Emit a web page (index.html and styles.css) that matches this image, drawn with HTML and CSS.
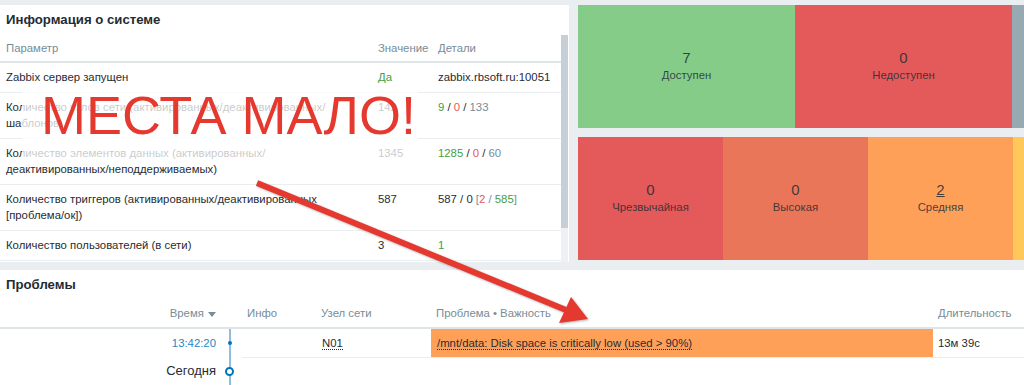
FILE: index.html
```html
<!DOCTYPE html>
<html lang="ru">

<head>
    <meta charset="UTF-8">
    <meta name="viewport" content="width=device-width, initial-scale=1.0">
    <title>Панель</title>
    <link rel="stylesheet" href="styles.css">
</head>

<body>
    <div class="dashboard">
        <div class="top-row">
            <section class="widget sysinfo">
                <h2 class="widget-title">Информация о системе</h2>
                <div class="scroll-area">
                    <table class="list">
                        <colgroup>
                            <col class="w-param">
                            <col class="w-val">
                            <col>
                        </colgroup>
                        <thead>
                            <tr>
                                <th>Параметр</th>
                                <th>Значение</th>
                                <th>Детали</th>
                            </tr>
                        </thead>
                        <tbody>
                            <tr>
                                <td>Zabbix сервер запущен</td>
                                <td class="green">Да</td>
                                <td>zabbix.rbsoft.ru:10051</td>
                            </tr>
                            <tr>
                                <td>Количество узлов сети (активированных/деактивированных/<br>шаблонов)</td>
                                <td>142</td>
                                <td><span class="green">9</span> / <span class="red">0</span> / <span class="grey">133</span></td>
                            </tr>
                            <tr>
                                <td>Количество элементов данных (активированных/<br>деактивированных/неподдерживаемых)</td>
                                <td>1345</td>
                                <td><span class="green">1285</span> / <span class="red">0</span> / <span class="grey">60</span></td>
                            </tr>
                            <tr>
                                <td>Количество триггеров (активированных/деактивированных<br>[проблема/ок])</td>
                                <td>587</td>
                                <td>587 / 0 <span class="grey">[</span><span class="red">2</span> <span class="grey">/</span> <span class="green">585</span><span class="grey">]</span></td>
                            </tr>
                            <tr>
                                <td>Количество пользователей (в сети)</td>
                                <td>3</td>
                                <td class="green">1</td>
                            </tr>
                        </tbody>
                    </table>
                    <div class="scrollbar"><div class="thumb"></div></div>
                </div>
            </section>

            <div class="side">
                <section class="widget tiles">
                    <div class="tile t-ok w-wide"><span class="num">7</span><span class="label">Доступен</span></div>
                    <div class="tile t-disaster w-wide"><span class="num">0</span><span class="label">Недоступен</span></div>
                    <div class="tile t-unknown w-wide"></div>
                </section>
                <section class="widget tiles">
                    <div class="tile t-disaster"><span class="num">0</span><span class="label">Чрезвычайная</span></div>
                    <div class="tile t-high"><span class="num">0</span><span class="label">Высокая</span></div>
                    <div class="tile t-average"><span class="num link">2</span><span class="label">Средняя</span></div>
                    <div class="tile t-warning"></div>
                </section>
            </div>
        </div>

        <section class="widget problems">
            <h2 class="widget-title">Проблемы</h2>
            <table class="list problem-list">
                <colgroup>
                    <col class="w-time">
                    <col class="w-tl">
                    <col class="w-info">
                    <col class="w-host">
                    <col class="w-problem">
                    <col>
                </colgroup>
                <thead>
                    <tr>
                        <th class="right">Время <span class="sort-arrow"></span></th>
                        <th></th>
                        <th>Инфо</th>
                        <th>Узел сети</th>
                        <th>Проблема • Важность</th>
                        <th>Длительность</th>
                    </tr>
                </thead>
                <tbody>
                    <tr class="event">
                        <td class="right time">13:42:20</td>
                        <td class="timeline"><span class="tl-dot"></span></td>
                        <td class="sep"></td>
                        <td class="sep"><span class="dotted">N01</span></td>
                        <td class="sep sev-average"><span class="dotted">/mnt/data: Disk space is critically low (used &gt; 90%)</span></td>
                        <td class="sep">13м 39с</td>
                    </tr>
                    <tr class="day">
                        <td class="right today">Сегодня</td>
                        <td class="timeline"><span class="tl-ring"></span></td>
                        <td colspan="4"></td>
                    </tr>
                </tbody>
            </table>
        </section>
    </div>

    <div class="note">МЕСТА МАЛО!</div>

    <svg class="arrow" width="1024" height="385" viewBox="0 0 1024 385">
        <line x1="257" y1="183" x2="566" y2="310" stroke="#e5392f" stroke-width="6" />
        <polygon points="559,323 571,297 588,319" fill="#e5392f" />
    </svg>
</body>

</html>
```

FILE: styles.css
```css
body {
    margin: 0;
    background: #ebeef0;
    font-family: "Liberation Sans", Arial, sans-serif;
    font-size: 11.35px;
    line-height: 16px;
    color: #1f2c33;
    overflow: hidden;
}

.dashboard {
    padding-top: 5px;
}

.top-row {
    display: flex;
    gap: 9px;
    height: 257px;
}

.widget {
    background: #fff;
}

.widget-title {
    margin: 0;
    padding: 0 6px;
    height: 30px;
    line-height: 30px;
    font-size: 13.2px;
    font-weight: bold;
}

/* system info */
.sysinfo {
    width: 569px;
    flex: none;
    display: flex;
    flex-direction: column;
}

.scroll-area {
    flex: 1;
    display: flex;
    overflow: hidden;
}

.list {
    border-collapse: collapse;
    table-layout: fixed;
}

.sysinfo .list {
    width: 561px;
    align-self: flex-start;
}

.w-param { width: 372px; }
.w-val { width: 60px; }

.list th {
    text-align: left;
    font-weight: normal;
    color: #768d99;
    padding: 5px 6px;
    border-bottom: 2px solid #dfe4e7;
    white-space: nowrap;
}

.list td {
    padding: 6px 6px 7px;
    vertical-align: top;
    border-bottom: 1px solid #ebeef0;
}

.scrollbar {
    width: 7px;
    background: #eef1f3;
    display: flex;
    flex-direction: column;
}

.thumb {
    height: 193px;
    background: #c5cfd5;
}

.green { color: #429e47; }
.red { color: #e45959; }
.grey { color: #768d99; }

/* tiles */
.side {
    flex: 1;
    display: flex;
    flex-direction: column;
    gap: 9px;
    overflow: hidden;
}

.tiles {
    height: 123px;
    display: flex;
    flex: none;
}

.tile {
    width: 145px;
    flex: none;
    display: flex;
    flex-direction: column;
    align-items: center;
    justify-content: center;
    color: rgba(31, 44, 51, 0.85);
}

.tile.w-wide { width: 217px; }

.tile .num {
    font-size: 15px;
    line-height: 18px;
}

.tile .label {
    line-height: 16px;
    padding-bottom: 1px;
}

.tile .link {
    text-decoration: underline;
}

.t-ok { background: #86cc89; }
.t-disaster { background: #e45959; }
.t-unknown { background: #97aab3; }
.t-high { background: #e97659; }
.t-average { background: #ffa059; }
.t-warning { background: #ffc859; }

/* problems */
.problems {
    margin-top: 8px;
    height: 115px;
    overflow: hidden;
}

.problem-list {
    width: 1024px;
}

.w-time { width: 222px; }
.w-tl { width: 20px; }
.w-info { width: 74px; }
.w-host { width: 115px; }
.w-problem { width: 502px; }

.problem-list th {
    padding: 5px 5px 6px;
}

.problem-list th.right,
.problem-list td.right {
    text-align: right;
    padding-right: 6px;
}

.problem-list td {
    padding: 6px 5px;
    border-bottom: none;
    vertical-align: middle;
}

.problem-list td.sep {
    border-bottom: 1px solid #ebeef0;
}

.problem-list td:nth-child(4),
.problem-list td:nth-child(5) {
    padding-left: 6px;
}

.problem-list .day td {
    padding-top: 5px;
}

.sort-arrow {
    display: inline-block;
    vertical-align: middle;
    border-left: 4px solid transparent;
    border-right: 4px solid transparent;
    border-top: 5px solid #768d99;
    margin-left: 1px;
}

.time {
    color: #1f86c6;
}

.today {
    font-size: 13px;
}

.timeline {
    background: linear-gradient(#8fbde0, #8fbde0) no-repeat 7px 0 / 2px 100%;
}

.problem-list td.timeline {
    padding: 0;
}

.tl-dot {
    display: block;
    width: 4px;
    height: 4px;
    margin-left: 6px;
    border-radius: 50%;
    background: #0275b8;
}

.tl-ring {
    display: block;
    width: 5px;
    height: 5px;
    margin-left: 3px;
    border: 2px solid #0275b8;
    border-radius: 50%;
    background: #fff;
}

.sev-average {
    background: #ffa059;
}

.dotted {
    border-bottom: 1px dotted #1f2c33;
}

/* overlay note */
.note {
    position: absolute;
    left: 22px;
    top: 92px;
    width: 377px;
    height: 71px;
    padding-left: 19px;
    background: rgba(255, 255, 255, 0.75);
    color: #e5392f;
    font-size: 54px;
    line-height: 46px;
    white-space: nowrap;
}

.arrow {
    position: absolute;
    left: 0;
    top: 0;
    pointer-events: none;
    filter: drop-shadow(1px 1px 1px rgba(0, 0, 0, 0.3));
}
```
